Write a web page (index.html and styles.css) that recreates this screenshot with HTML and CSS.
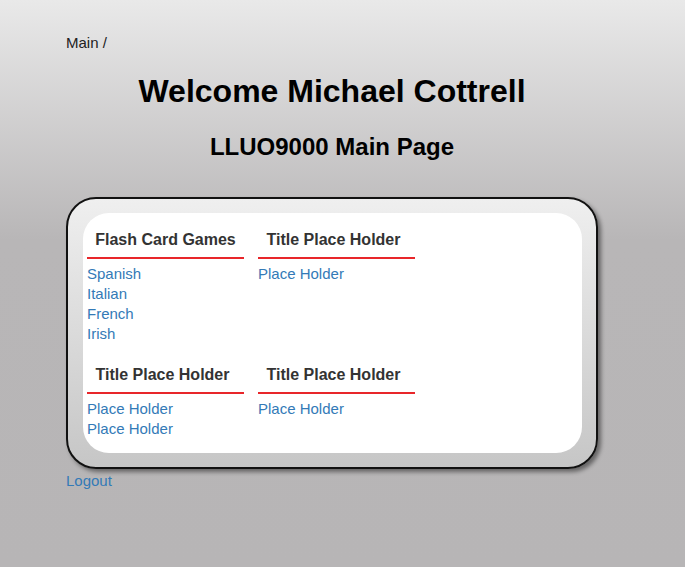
FILE: index.html
```html
<!DOCTYPE html>
<html lang="en">
<head>
<meta charset="utf-8">
<title>LLUO9000 Main Page</title>
<link rel="stylesheet" href="styles.css">
</head>
<body>
<div class="page">
  <div class="crumb">Main /</div>
  <h1 class="welcome">Welcome Michael Cottrell</h1>
  <h2 class="subtitle">LLUO9000 Main Page</h2>
  <div class="panel">
    <div class="inner">
      <div class="cell">
        <h3 class="cell-title">Flash Card Games</h3>
        <ul class="links">
          <li><a href="#">Spanish</a></li>
          <li><a href="#">Italian</a></li>
          <li><a href="#">French</a></li>
          <li><a href="#">Irish</a></li>
        </ul>
      </div>
      <div class="cell">
        <h3 class="cell-title cell-title--ph">Title Place Holder</h3>
        <ul class="links">
          <li><a href="#">Place Holder</a></li>
        </ul>
      </div>
      <div class="cell">
        <h3 class="cell-title cell-title--ph">Title Place Holder</h3>
        <ul class="links">
          <li><a href="#">Place Holder</a></li>
          <li><a href="#">Place Holder</a></li>
        </ul>
      </div>
      <div class="cell">
        <h3 class="cell-title cell-title--ph">Title Place Holder</h3>
        <ul class="links">
          <li><a href="#">Place Holder</a></li>
        </ul>
      </div>
    </div>
  </div>
  <a class="logout" href="#">Logout</a>
</div>
</body>
</html>
```

FILE: styles.css
```css
html {
  background: #b7b5b6;
}
body {
  margin: 0;
  min-height: 567px;
  font-family: "Liberation Sans", Arial, sans-serif;
  background: linear-gradient(to bottom, #e9e9e9 0px, #b8b6b7 240px, #b7b5b6 567px);
  background-repeat: no-repeat;
}
.page {
  width: 532px;
  margin-left: 66px;
  padding-top: 33px;
  display: flex;
  flex-direction: column;
}
.crumb {
  font-size: 15px;
  line-height: 20px;
  color: #222;
}
.welcome {
  margin: 21px 0 0;
  font-size: 32px;
  line-height: 35px;
  font-weight: bold;
  text-align: center;
  color: #000;
}
.subtitle {
  margin: 25px 0 0;
  font-size: 24px;
  line-height: 26px;
  font-weight: bold;
  text-align: center;
  color: #000;
}
.panel {
  margin-top: 37px;
  border: 2px solid #111;
  border-radius: 30px;
  padding: 14px 14px 14px 15px;
  background: linear-gradient(to bottom, #efefef, #c6c6c6);
  box-shadow: 3px 3px 4px rgba(0, 0, 0, 0.45);
}
.inner {
  background: #fff;
  border-radius: 26px;
  padding: 0 4px 10px;
  display: grid;
  grid-template-columns: 157px 157px;
  column-gap: 14px;
  align-items: start;
}
.cell {
  margin-bottom: 4px;
}
.cell-title {
  margin: 17px 0 0;
  padding-bottom: 7px;
  font-size: 16px;
  line-height: 20px;
  font-weight: bold;
  color: #333;
  text-align: center;
  border-bottom: 2px solid #e8262a;
}
.cell-title--ph {
  padding-right: 6px;
}
.links {
  list-style: none;
  margin: 5px 0 0;
  padding: 0;
}
.links li {
  font-size: 15px;
  line-height: 20px;
}
.links a,
.logout {
  color: #337ab7;
  text-decoration: none;
}
.logout {
  margin-top: 2px;
  font-size: 15px;
  line-height: 20px;
  align-self: flex-start;
}
```
